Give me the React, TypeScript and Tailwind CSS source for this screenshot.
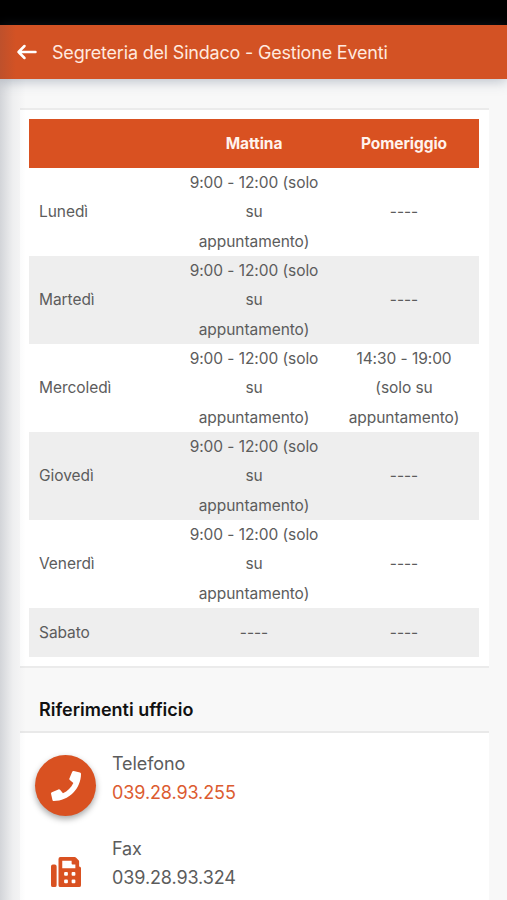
import React from 'react'
import { FaPhone, FaFax } from 'react-icons/fa'

const solo = "9:00 - 12:00 (solo su appuntamento)"

const orari = [
  { giorno: "Lunedì", mattina: solo, pomeriggio: "----" },
  { giorno: "Martedì", mattina: solo, pomeriggio: "----" },
  { giorno: "Mercoledì", mattina: solo, pomeriggio: "14:30 - 19:00 (solo su appuntamento)" },
  { giorno: "Giovedì", mattina: solo, pomeriggio: "----" },
  { giorno: "Venerdì", mattina: solo, pomeriggio: "----" },
]

function Header() {
  return (
    <header className="relative h-[54px] shrink-0 bg-[#d35224] flex items-center pl-4 gap-[15px] shadow-[0_2px_12px_rgba(60,80,110,0.35)]">
      <button aria-label="Indietro">
        <svg width="21" height="18" viewBox="0 0 21 18" fill="none" stroke="#fff" strokeWidth="2.5" strokeLinecap="round" strokeLinejoin="round">
          <path d="M19.5 9H2.5M8.5 3L2.5 9l6 6" />
        </svg>
      </button>
      <h1 className="text-[18px] tracking-[-0.2px] text-[#ffe9df] whitespace-nowrap">Segreteria del Sindaco - Gestione Eventi</h1>
    </header>
  )
}

function Orari() {
  return (
    <div className="ml-5 mr-[18px] mt-[29px] h-[560px] bg-white border-y-2 border-[#ebebeb] px-[9px] pt-[9px]">
      <table className="w-[450px] table-fixed border-collapse text-[15.5px] leading-[29.3px] tracking-[-0.06px] text-[#5c5c5c]">
        <thead>
          <tr className="h-[49px] bg-[#d95121] text-[#fff3ed]">
            <th></th>
            <th className="font-bold">Mattina</th>
            <th className="font-bold">Pomeriggio</th>
          </tr>
        </thead>
        <tbody>
          {orari.map((o) => (
            <tr key={o.giorno} className="h-[88px] even:bg-[#eeeeee]">
              <td className="pl-2.5">{o.giorno}</td>
              <td className="px-2.5 text-center">{o.mattina}</td>
              <td className="px-2.5 text-center">{o.pomeriggio}</td>
            </tr>
          ))}
          <tr className="h-[49px] bg-[#eeeeee]">
            <td className="pl-2.5">Sabato</td>
            <td className="text-center">----</td>
            <td className="text-center">----</td>
          </tr>
        </tbody>
      </table>
    </div>
  )
}

export default function App() {
  return (
    <div className="relative h-[900px] w-full overflow-hidden bg-[#f8f8f8] flex flex-col font-['Inter',sans-serif]">
      <div className="h-[25px] shrink-0 bg-black"></div>
      <Header />
      <Orari />
      <h2 className="h-[63px] shrink-0 pl-[39px] pt-[27px] text-[18px] leading-[29px] font-semibold text-[#111]">Riferimenti ufficio</h2>
      <div className="ml-5 mr-[18px] grow border-t-2 border-[#e9e9e9] bg-white pl-[15px] pt-[16px] text-[18px] leading-[29px] tracking-[-0.1px] text-[#5c5c5c]">
        <div className="flex h-[85px] gap-4">
          <div className="mt-[6px] flex size-[61px] items-center justify-center rounded-full bg-[#d95121] shadow-[0_3px_6px_rgba(0,0,0,0.35)]">
            <FaPhone className="size-[30px] text-white" />
          </div>
          <div>
            <p>Telefono</p>
            <p className="text-[#dc5b30]">039.28.93.255</p>
          </div>
        </div>
        <div className="flex gap-4">
          <div className="mt-[23px] flex w-[61px] justify-center">
            <FaFax className="size-[30px] text-[#d95121]" />
          </div>
          <div>
            <p>Fax</p>
            <p>039.28.93.324</p>
          </div>
        </div>
      </div>
      {/* shadow cast by the page underneath on the left edge */}
      <div className="pointer-events-none absolute left-0 top-[25px] h-[54px] w-4 bg-linear-to-r from-[#3c465a]/14 to-transparent"></div>
      <div className="pointer-events-none absolute left-0 top-[79px] bottom-0 w-[26px] bg-linear-to-r from-[#3c465a]/20 via-[#3c465a]/5 to-transparent"></div>
    </div>
  )
}
